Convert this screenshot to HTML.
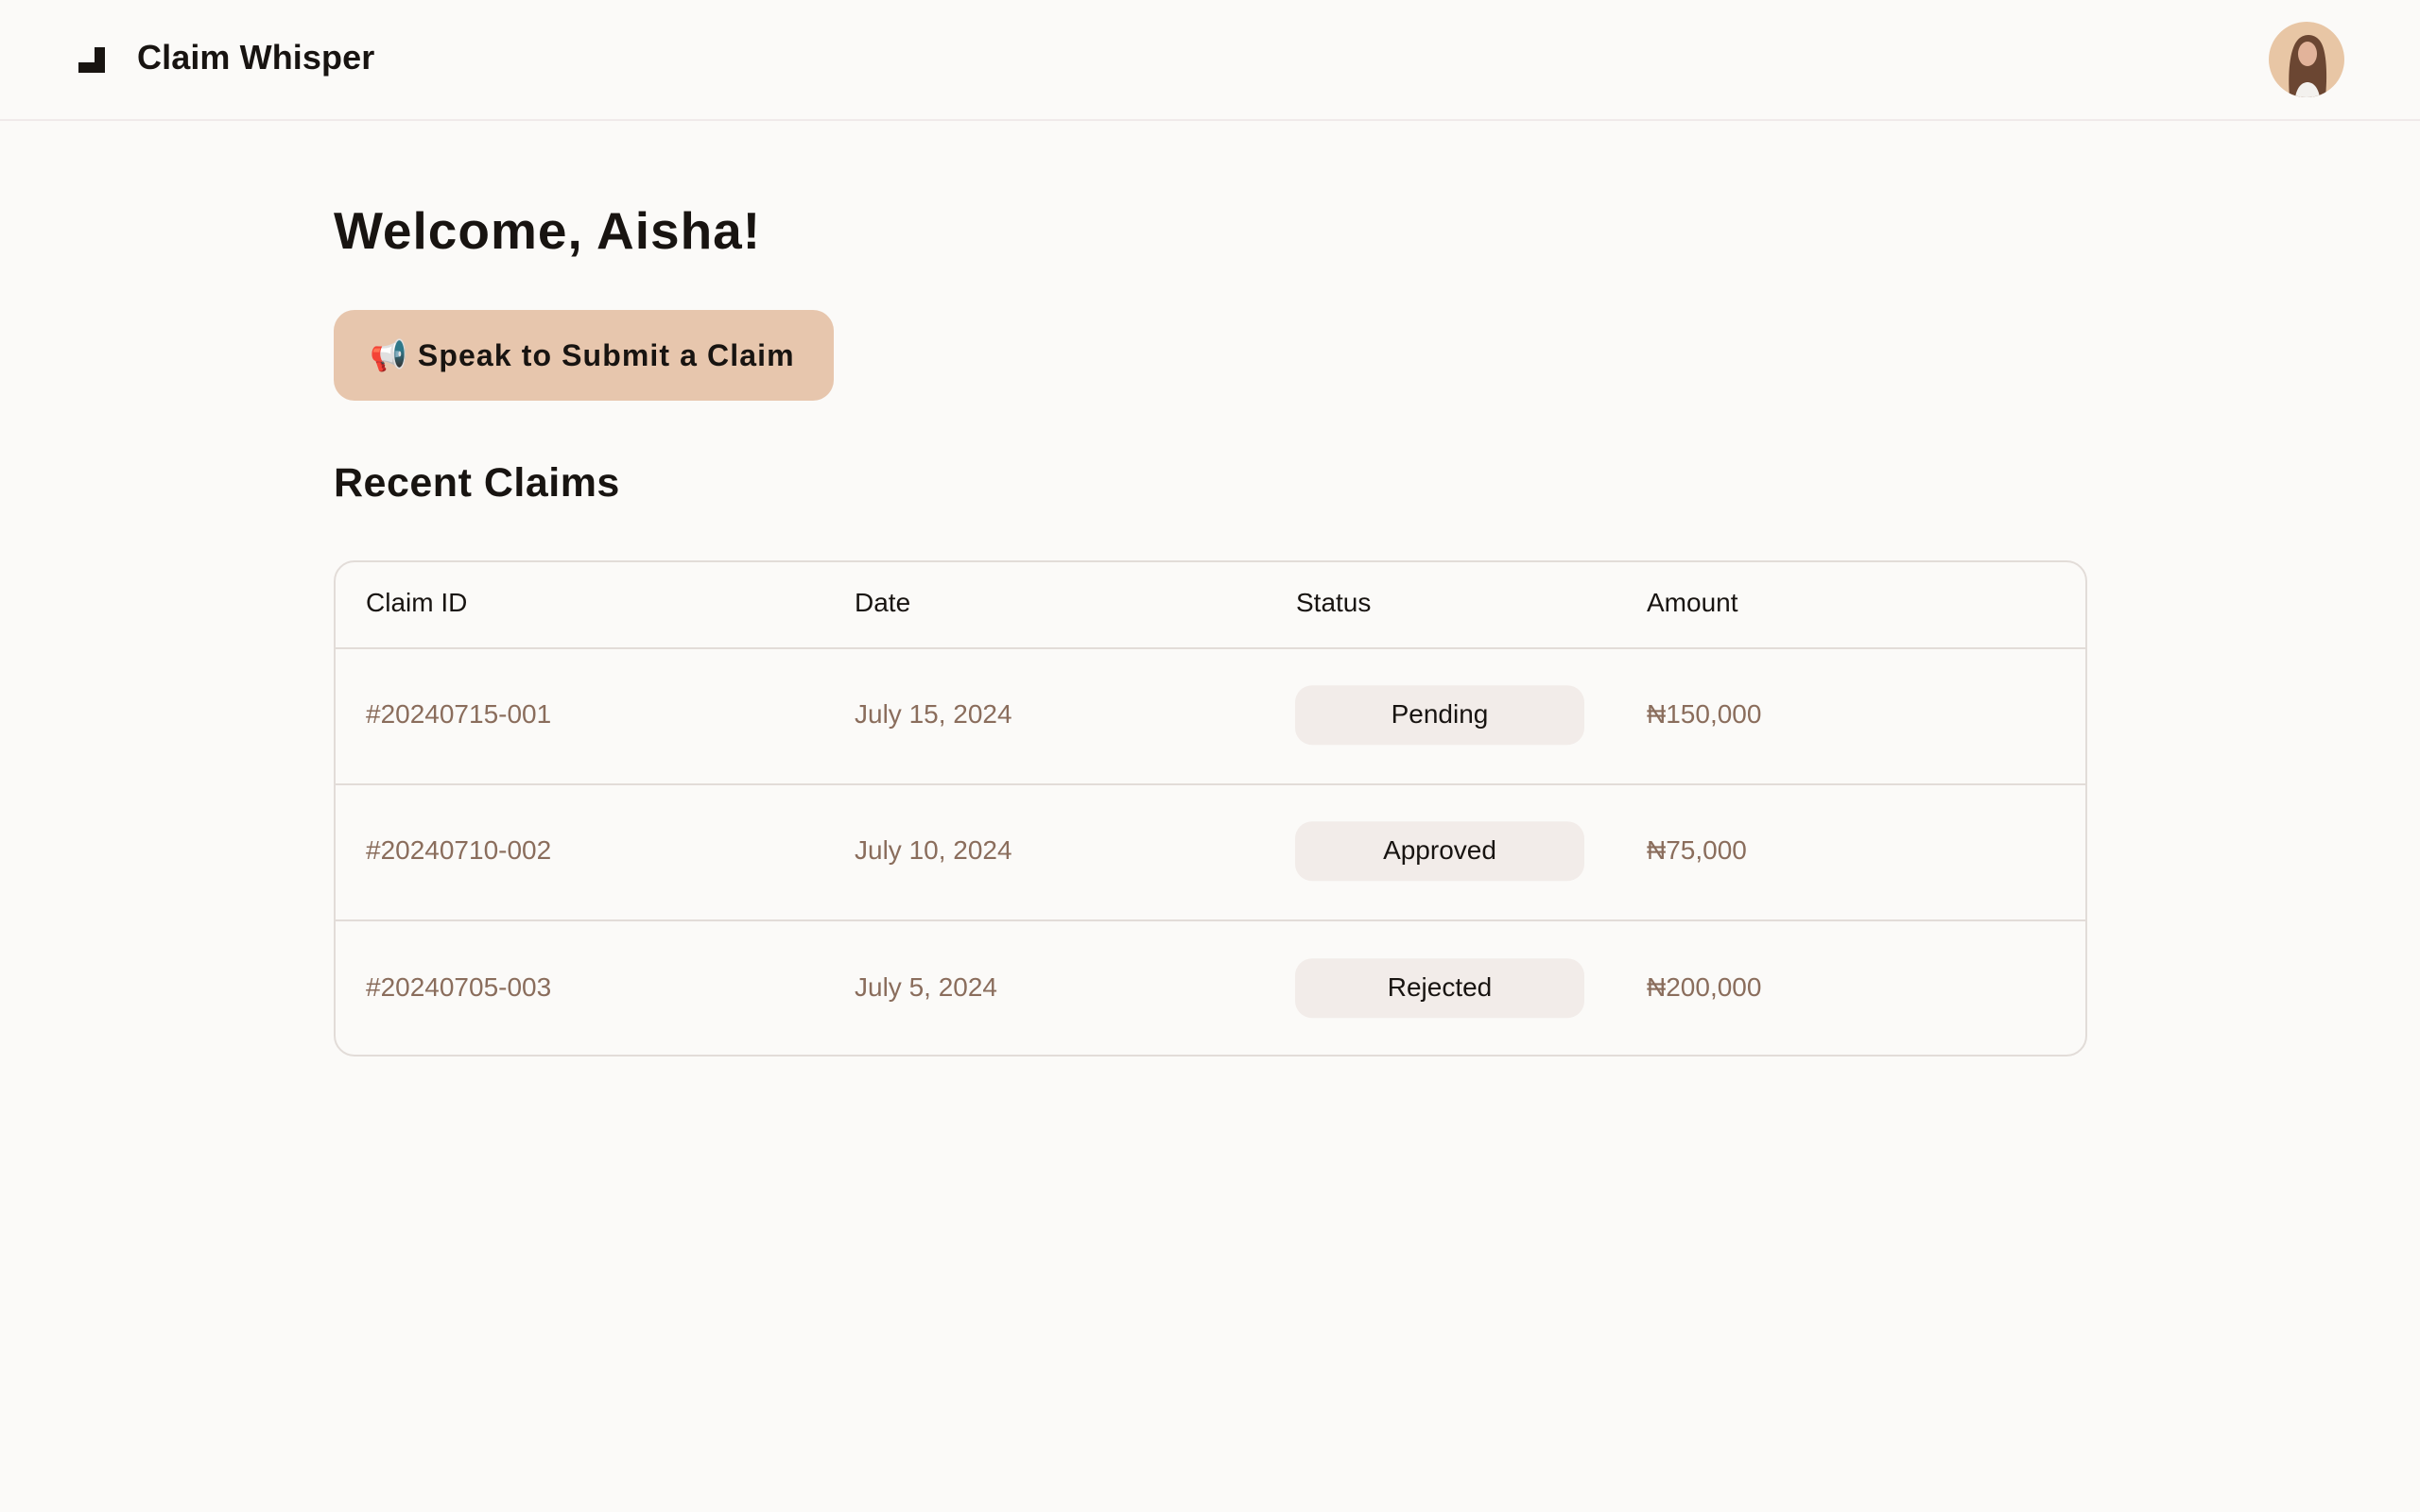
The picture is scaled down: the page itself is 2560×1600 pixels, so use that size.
<!DOCTYPE html>
<html><head><meta charset="utf-8"><style>
*{margin:0;padding:0;box-sizing:border-box}
body{width:2560px;height:1600px;background:#fbfaf8;font-family:"Liberation Sans","DejaVu Sans",sans-serif;color:#181411;position:relative;overflow:hidden}
header{position:absolute;left:0;top:0;width:2560px;height:128px;border-bottom:2px solid #f0eaea}
.logo{position:absolute;left:83px;top:50px}
.brand{position:absolute;left:145px;top:40px;font-size:36px;font-weight:bold;letter-spacing:0.1px}
.av{position:absolute;left:2400px;top:23px;width:80px;height:80px;border-radius:50%;background:#e8c6a5;overflow:hidden}
h1{position:absolute;left:353px;top:212px;font-size:55px;font-weight:bold;letter-spacing:1px}
.btn{position:absolute;left:353px;top:328px;width:529px;height:96px;border-radius:22px;background:#e7c6ad;font-size:32px;font-weight:bold;display:flex;align-items:center;padding-left:38px;letter-spacing:1.1px}
h2{position:absolute;left:353px;top:487px;font-size:43px;font-weight:bold;letter-spacing:0.5px}
.tbl{position:absolute;left:353px;top:593px;width:1855px;height:525px;border:2px solid #e2dcd8;border-radius:22px;overflow:hidden}
.row{position:absolute;left:0;width:100%;border-bottom:2px solid #e2dcd8;font-size:28px}
.row span{position:absolute;top:50%;transform:translateY(-56%)}
.h span{color:#181411}
.d span{color:#8a6d5c}
.pill{position:absolute;left:1015px;top:50%;transform:translateY(-52%);width:306px;height:63px;border-radius:18px;background:#f2ece9;color:#181411;text-align:center;line-height:61px;font-size:28px}
</style></head><body>
<header>
<svg class="logo" width="28" height="27" viewBox="0 0 28 27"><path d="M17 0h11v27H0v-11h17z" fill="#181411"/></svg>
<div class="brand">Claim Whisper</div>
<div class="av"><svg width="80" height="80" viewBox="0 0 80 80"><path d="M22 80C20 55 22 30 30 20c6-8 18-8 24 0 8 10 8 40 6 60z" fill="#6b4632"/><ellipse cx="41" cy="34" rx="10" ry="13" fill="#e2b39a"/><path d="M28 80c2-12 8-16 13-16s11 4 13 16z" fill="#f3f1ee"/></svg></div>
</header>
<h1>Welcome, Aisha!</h1>
<div class="btn">📢 Speak to Submit a Claim</div>
<h2>Recent Claims</h2>
<div class="tbl">
<div class="row h" style="top:0;height:92px"><span style="left:32px">Claim ID</span><span style="left:549px">Date</span><span style="left:1016px">Status</span><span style="left:1387px">Amount</span></div>
<div class="row d" style="top:92px;height:144px"><span style="left:32px">#20240715-001</span><span style="left:549px">July 15, 2024</span><div class="pill">Pending</div><span style="left:1387px">₦150,000</span></div>
<div class="row d" style="top:236px;height:144px"><span style="left:32px">#20240710-002</span><span style="left:549px">July 10, 2024</span><div class="pill">Approved</div><span style="left:1387px">₦75,000</span></div>
<div class="row d" style="top:380px;height:144px;border-bottom:none"><span style="left:32px">#20240705-003</span><span style="left:549px">July 5, 2024</span><div class="pill">Rejected</div><span style="left:1387px">₦200,000</span></div>
</div>
</body></html>
